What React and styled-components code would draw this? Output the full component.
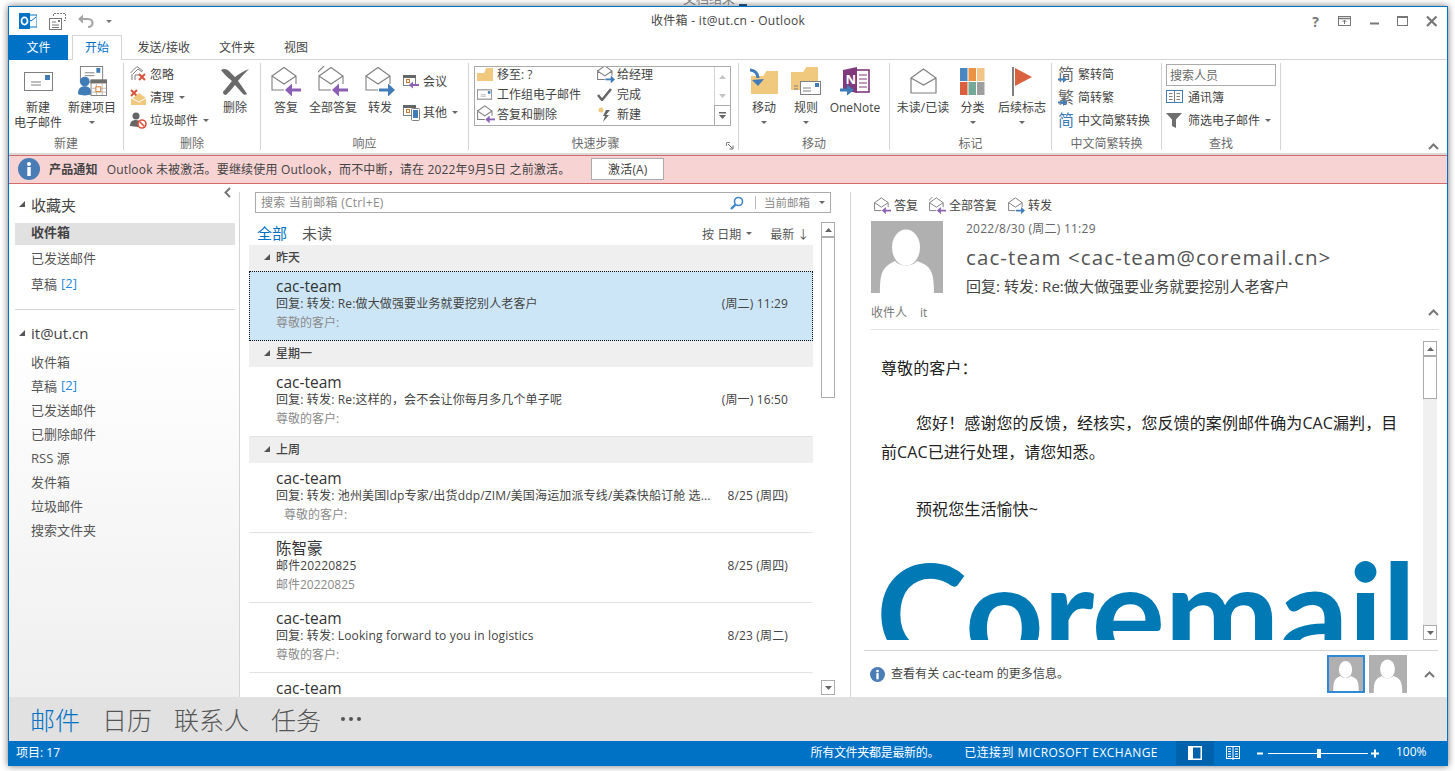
import React from 'react';
import styled, { createGlobalStyle } from 'styled-components';

const GlobalStyle = createGlobalStyle`
  html, body {
    margin: 0;
    padding: 0;
    height: 100%;
    overflow: hidden;
    background: #fff;
  }
  body {
    font-family: "Open Sans", "Noto Sans CJK SC", sans-serif;
    font-size: 12px;
    color: #444;
  }
`;

const Page = styled.div`
  padding: 6px 0 0 8px;
  position: relative;
`;

const BehindText = styled.div`
  position: absolute;
  left: 683px;
  top: -10px;
  font-size: 13px;
  line-height: 16px;
  color: #8a8a8a;
`;

const BehindMark = styled.div`
  position: absolute;
  left: 739px;
  top: 4px;
  width: 8px;
  height: 2px;
  background: #2b5c8a;
`;

const Window = styled.div`
  width: 1440px;
  height: 760px;
  box-sizing: border-box;
  border: 1px solid #0072c6;
  box-shadow: 0 0 7px rgba(0, 0, 0, 0.55);
  display: flex;
  flex-direction: column;
  background: #fff;
  position: relative;
`;

/* title bar */
const TitleBar = styled.div`
  height: 28px;
  flex: none;
  display: grid;
  grid-template-columns: 1fr auto 1fr;
  align-items: center;
`;

const Qat = styled.div`
  display: flex;
  align-items: center;
  gap: 12px;
  padding-left: 10px;
`;

const Title = styled.div`
  font-size: 12px;
  color: #444;
  letter-spacing: 0.3px;
  padding-bottom: 2px;
`;

const WinControls = styled.div`
  display: flex;
  justify-content: flex-end;
  align-items: center;
  padding-right: 1px;
`;

const WinControl = styled.div`
  width: 29px;
  height: 22px;
  display: flex;
  align-items: center;
  justify-content: center;
  color: #777;
  font-weight: 700;
  font-size: 14px;
`;

/* tabs */
const TabBar = styled.div`
  height: 25px;
  flex: none;
  display: flex;
  box-sizing: border-box;
  border-bottom: 1px solid #d4d4d4;
`;

const FileTab = styled.div`
  width: 59px;
  height: 25px;
  box-sizing: border-box;
  padding-bottom: 2px;
  background: #0072c6;
  color: #fff;
  display: flex;
  align-items: center;
  justify-content: center;
`;

const Tab = styled.div`
  height: 25px;
  box-sizing: border-box;
  display: flex;
  align-items: center;
  padding: 0 14.5px 2px;
  color: #444;
  ${(p) => p.$active && `
    width: 50px;
    justify-content: center;
    padding: 0 0 2px;
    margin: 0 1px 0 4px;
    color: #0072c6;
    background: #fff;
    border: 1px solid #d4d4d4;
    border-bottom: none;
  `}
`;

/* ribbon */
const Ribbon = styled.div`
  height: 95px;
  flex: none;
  box-sizing: border-box;
  border-bottom: 2px solid #d9d9d9;
  display: flex;
  position: relative;
`;

const Group = styled.div`
  width: ${(p) => p.$w}px;
  flex: none;
  box-sizing: border-box;
  margin-top: 3px;
  margin-bottom: 3px;
  border-right: 1px solid #d4d4d4;
  display: flex;
  flex-direction: column;
  position: relative;
`;

const GroupBody = styled.div`
  flex: 1;
  display: flex;
  gap: ${(p) => p.$gap ?? 5}px;
  padding-left: ${(p) => p.$pl ?? 5}px;
  min-height: 0;
`;

const GroupLabel = styled.div`
  height: 20px;
  flex: none;
  box-sizing: border-box;
  display: flex;
  align-items: center;
  justify-content: center;
  color: #6a6a6a;
  padding-top: 6px;
  padding-right: ${(p) => p.$pr ?? 0}px;
`;

const LargeBtn = styled.div`
  width: ${(p) => p.$w}px;
  flex: none;
  display: flex;
  flex-direction: column;
  align-items: center;
  line-height: 15px;
  color: #444;
  text-align: center;
  white-space: nowrap;
`;

const LargeIcon = styled.div`
  height: 33px;
  flex: none;
  box-sizing: border-box;
  padding-top: 3px;
  width: 100%;
  display: flex;
  align-items: center;
  justify-content: center;
  margin-bottom: 4px;
`;

const LargeLine = styled.div`
  flex: none;
`;

const Caret = styled.span`
  display: inline-block;
  width: 0;
  height: 0;
  border-left: 3px solid transparent;
  border-right: 3px solid transparent;
  border-top: 3px solid ${(p) => p.$color ?? '#666'};
  margin-left: ${(p) => p.$ml ?? 0}px;
  vertical-align: middle;
`;

const CaretRow = styled.div`
  height: 15px;
  flex: none;
  display: flex;
  align-items: center;
`;

const SmallCol = styled.div`
  flex: none;
  width: ${(p) => p.$w}px;
  display: flex;
  flex-direction: column;
  gap: ${(p) => p.$gap ?? 0}px;
  padding-top: ${(p) => p.$pt ?? 0}px;
`;

const SmallBtn = styled.div`
  height: 23px;
  flex: none;
  box-sizing: border-box;
  padding-bottom: 1px;
  display: flex;
  align-items: center;
  white-space: nowrap;
  color: #444;
`;

const SmallIcon = styled.span`
  width: ${(p) => p.$w ?? 20}px;
  flex: none;
  display: flex;
  align-items: center;
  position: relative;
`;

const Gallery = styled.div`
  width: 257px;
  height: 60px;
  flex: none;
  margin: 3px 0 0 5px;
  box-sizing: border-box;
  border: 1px solid #ababab;
  display: flex;
  overflow: hidden;
`;

const GalleryGrid = styled.div`
  flex: 1;
  display: grid;
  grid-template-columns: 120px 1fr;
  grid-auto-rows: 20px;
  padding-left: 2px;
  margin-top: -3px;
`;

const GalleryItem = styled.div`
  display: flex;
  align-items: center;
  white-space: nowrap;
`;

const GalleryIcon = styled.span`
  width: 20px;
  flex: none;
  display: flex;
  align-items: center;
`;

const GalleryScroll = styled.div`
  width: 15px;
  flex: none;
  border-left: 1px solid #d4d4d4;
  display: flex;
  flex-direction: column;
`;

const GalleryScrollBtn = styled.div`
  flex: 1;
  display: flex;
  align-items: center;
  justify-content: center;
  ${(p) => p.$last && 'border-top: 1px solid #ababab; border-left: 1px solid #ababab; margin-left: -1px;'}
`;

const Launcher = styled.div`
  position: absolute;
  right: 4px;
  bottom: 0;
  line-height: 0;
`;

const CollapseRibbon = styled.div`
  position: absolute;
  right: 8px;
  bottom: 3px;
  line-height: 0;
`;

const ZhGlyph = styled.span`
  font-size: 16px;
  line-height: 16px;
  color: ${(p) => p.$blue ? '#3f7cb8' : '#666'};
  position: relative;
  display: inline-block;
`;

const ZhArrow = styled.span`
  position: absolute;
  left: 0;
  bottom: -1px;
  line-height: 0;
`;

const PeopleSearch = styled.div`
  width: 110px;
  height: 22px;
  flex: none;
  box-sizing: border-box;
  border: 1px solid #ababab;
  color: #6a6a6a;
  display: flex;
  align-items: center;
  padding-left: 3px;
  margin-top: 1px;
`;

/* notice */
const Notice = styled.div`
  height: 29px;
  flex: none;
  box-sizing: border-box;
  background: #f7d3d4;
  border-top: 1px solid #d46a6a;
  border-bottom: 1px solid #d46a6a;
  display: flex;
  align-items: center;
  padding: 0 0 1px 9px;
  color: #444;
  letter-spacing: 0.17px;
`;

const NoticeTitle = styled.b`
  margin: 0 9px 0 9px;
  font-weight: 700;
`;

const NoticeBtn = styled.div`
  width: 73px;
  height: 22px;
  box-sizing: border-box;
  margin-left: 21px;
  background: #fff;
  border: 1px solid #ababab;
  display: flex;
  align-items: center;
  justify-content: center;
  color: #444;
`;

/* main */
const Main = styled.div`
  flex: 1;
  min-height: 0;
  display: flex;
`;

const PaneRule = styled.div`
  width: 1px;
  flex: none;
  margin-top: 8px;
  background: #d4d4d4;
`;

const LeftPane = styled.div`
  width: 230px;
  flex: none;
  box-sizing: border-box;
  padding: 0 4px 0 6px;
  background: linear-gradient(#fff 30%, #efefef);
  position: relative;
`;

const PaneChevron = styled.div`
  position: absolute;
  right: 6px;
  top: 5px;
  line-height: 0;
`;

const FolderHead = styled.div`
  height: 24px;
  box-sizing: border-box;
  display: flex;
  align-items: center;
  font-size: 15px;
  color: #444;
  padding: 0 0 2px 4px;
  margin-top: ${(p) => p.$mt ?? 0}px;
  margin-bottom: ${(p) => p.$mb ?? 0}px;
`;

const Tri = styled.span`
  width: 0;
  height: 0;
  border-style: solid;
  border-width: 0 0 6px 6px;
  border-color: transparent transparent #555 transparent;
  margin-right: ${(p) => p.$mr ?? 6}px;
  flex: none;
`;

const FolderItem = styled.div`
  height: ${(p) => p.$h}px;
  box-sizing: border-box;
  display: flex;
  align-items: center;
  padding: 0 0 2px 16px;
  font-size: 13px;
  color: #555;
  ${(p) => p.$active && 'background: #e1e1e1; font-weight: 700; color: #444; padding-bottom: 5px;'}
`;

const Count = styled.span`
  color: #1f8ae0;
  margin-left: 4px;
`;

const FolderRule = styled.div`
  height: 1px;
  background: #d4d4d4;
  margin: 12px 0 12px;
`;

const ListPane = styled.div`
  width: 610px;
  flex: none;
  box-sizing: border-box;
  padding: 8px 0 0 9px;
  display: flex;
  flex-direction: column;
  overflow: hidden;
`;

const SearchBox = styled.div`
  width: 576px;
  height: 21px;
  flex: none;
  margin-left: 6px;
  box-sizing: border-box;
  border: 1px solid #ababab;
  display: flex;
  align-items: center;
  padding: 0 5px;
  color: #8a8a8a;
  font-size: 12px;
`;

const SearchText = styled.span`
  flex: 1;
  letter-spacing: 0.25px;
  padding-bottom: 2px;
`;

const SearchScope = styled.span`
  border-left: 1px solid #bbb;
  margin-left: 11px;
  padding-left: 8px;
  margin-right: 9px;
  line-height: 13px;
  font-size: 11.5px;
  color: #8a8a8a;
`;

const ListBody = styled.div`
  flex: 1;
  min-height: 0;
  margin-top: 9px;
  display: flex;
  gap: 8px;
`;

const ListCol = styled.div`
  width: 564px;
  flex: none;
  overflow: hidden;
`;

const FilterRow = styled.div`
  height: 23px;
  box-sizing: border-box;
  display: flex;
  align-items: center;
  padding: 0 0 3px 8px;
`;

const Filter = styled.span`
  font-size: 15px;
  margin-right: 15px;
  color: ${(p) => p.$active ? '#0072c6' : '#555'};
`;

const SortBtn = styled.span`
  font-size: 12px;
  color: #555;
  display: flex;
  align-items: center;
  margin-top: 3px;
  margin-left: ${(p) => p.$ml ?? 0}px;
`;

const Section = styled.div`
  height: 26px;
  box-sizing: border-box;
  background: #efefef;
  display: flex;
  align-items: center;
  padding: 0 0 2px 15px;
  font-size: 12px;
  color: #444;
  font-weight: 500;
`;

const Mail = styled.div`
  height: 70px;
  box-sizing: border-box;
  padding: 5px 24px 0 26px;
  border: 1px solid transparent;
  border-bottom-color: #e1e1e1;
  ${(p) => p.$selected && `
    background: #cde6f7;
    border: 1px dotted #111;
  `}
`;

const MailFrom = styled.div`
  font-size: 15.5px;
  line-height: 18px;
  color: #333;
`;

const MailRow = styled.div`
  display: flex;
  justify-content: space-between;
  line-height: 17px;
  font-size: 12px;
  color: #444;
  letter-spacing: 0.15px;
`;

const MailSubject = styled.span`
  width: 438px;
  white-space: nowrap;
  overflow: hidden;
`;

const MailPreview = styled.div`
  line-height: 22px;
  font-size: 12px;
  color: #8a8a8a;
  padding-left: ${(p) => p.$indent ?? 0}px;
`;

const ScrollTrack = styled.div`
  width: 14px;
  flex: none;
  background: ${(p) => p.$bg};
  display: flex;
  flex-direction: column;
  height: ${(p) => p.$h}px;
`;

const ScrollBtn = styled.div`
  height: 15px;
  flex: none;
  box-sizing: border-box;
  border: 1px solid #ababab;
  background: #fff;
  display: flex;
  align-items: center;
  justify-content: center;
`;

const ScrollThumb = styled.div`
  height: ${(p) => p.$h}px;
  flex: none;
  box-sizing: border-box;
  border: 1px solid #ababab;
  background: #fff;
  margin-bottom: auto;
`;

/* reading pane */
const Reader = styled.div`
  flex: 1;
  min-width: 0;
  display: flex;
  flex-direction: column;
`;

const ReaderActions = styled.div`
  height: 37px;
  flex: none;
  box-sizing: border-box;
  padding: 11px 0 0 23px;
  display: flex;
  gap: 11px;
`;

const ReaderAction = styled.div`
  height: 20px;
  display: flex;
  align-items: center;
  gap: 3px;
  color: #444;
`;

const ReaderHead = styled.div`
  height: 72px;
  flex: none;
  display: flex;
  padding-left: 20px;
`;

const HeadText = styled.div`
  margin-left: 23px;
  display: flex;
  flex-direction: column;
`;

const HeadDate = styled.div`
  font-size: 12px;
  line-height: 16px;
  color: #666;
  letter-spacing: 0.25px;
`;

const HeadFrom = styled.div`
  font-size: 20.5px;
  line-height: 28px;
  margin-top: 6px;
  color: #555;
  letter-spacing: 1.1px;
`;

const HeadSubject = styled.div`
  font-size: 15px;
  line-height: 20px;
  margin-top: 5px;
  color: #444;
  letter-spacing: 0.05px;
`;

const ToRow = styled.div`
  height: 37px;
  flex: none;
  box-sizing: border-box;
  margin: 0 8px 0 20px;
  border-bottom: 1px solid #e1e1e1;
  display: flex;
  align-items: center;
  color: #777;
  padding-top: 2px;
`;

const ToName = styled.span`
  margin-left: 13px;
  flex: 1;
`;

const BodyWrap = styled.div`
  height: 320px;
  flex: none;
  display: flex;
`;

const MailBody = styled.div`
  width: 572px;
  flex: none;
  box-sizing: border-box;
  height: 310px;
  padding: 24px 0 0 30px;
  overflow: hidden;
  font-size: 16px;
  line-height: 29px;
  color: #222;
  letter-spacing: 0.1px;
`;

const BodyLine = styled.div`
  width: 520px;
  margin-bottom: ${(p) => p.$mb ?? 0}px;
  text-indent: ${(p) => p.$indent ?? 0}px;
`;

const CoremailLogo = styled.div`
  font-family: Lato, sans-serif;
  font-weight: 700;
  font-size: 138px;
  line-height: 138px;
  height: 138px;
  color: #0079b4;
  margin: 18px 0 0 -5px;
  letter-spacing: -1px;
  white-space: nowrap;
`;

const BodyScroll = styled.div`
  padding: 11px 0 0 0;
`;

const ReaderFoot = styled.div`
  flex: 1;
  box-sizing: border-box;
  margin-left: 13px;
  margin-right: 9px;
  border-top: 1px solid #d4d4d4;
  display: flex;
  align-items: center;
  padding-left: 6px;
  color: #444;
`;

const FootText = styled.span`
  margin-left: 6px;
  flex: 1;
  padding-bottom: 3px;
  letter-spacing: 0.05px;
`;

const AvatarFrame = styled.div`
  width: 38px;
  height: 38px;
  box-sizing: border-box;
  line-height: 0;
  border: ${(p) => p.$active ? '2px solid #2e8ad8' : '0'};
  margin-right: 4px;
`;

const FootChevron = styled.span`
  margin: 0 3px 0 13px;
  line-height: 0;
`;

/* nav + status */
const NavBar = styled.div`
  height: 44px;
  flex: none;
  background: #e1e1e1;
  display: flex;
  align-items: center;
  padding-left: 21px;
  gap: 22px;
`;

const NavItem = styled.span`
  font-size: 25px;
  font-weight: 300;
  color: ${(p) => p.$active ? '#0072c6' : '#555'};
`;

const NavMore = styled.span`
  display: flex;
  gap: 4px;
  margin-left: -2px;
`;

const Dot = styled.i`
  width: 4px;
  height: 4px;
  border-radius: 50%;
  background: #555;
`;

const StatusBar = styled.div`
  height: 24px;
  flex: none;
  box-sizing: border-box;
  background: #0072c6;
  color: #fff;
  display: flex;
  align-items: center;
  padding-left: 7px;
  font-size: 12px;
`;

const StatusGrow = styled.span`
  flex: 1;
`;

const StatusLabel = styled.span`
  padding-bottom: 3px;
`;

const StatusText = styled.span`
  margin-right: ${(p) => p.$mr}px;
  letter-spacing: ${(p) => p.$ls}px;
  padding-bottom: 3px;
`;

const ViewBtn = styled.div`
  width: ${(p) => p.$w}px;
  height: 24px;
  display: flex;
  align-items: center;
  justify-content: center;
  ${(p) => p.$active && 'background: #0062ab;'}
`;

const Zoomer = styled.div`
  display: flex;
  align-items: center;
  width: 144px;
  box-sizing: border-box;
  padding-left: 5px;
  line-height: 0;
`;

const ZoomValue = styled.span`
  width: 51px;
  padding-bottom: 3px;
`;

/* icons */
const GREY = '#7f7f7f';
const PURPLE = '#8a5fb5';
const BLUE = '#3f7cb8';
const TAN = '#f0c87e';

const OutlookLogo = () => (
  <svg width="18" height="18" viewBox="0 0 18 18">
    <rect x="6" y="3" width="12" height="12" fill="#fff" stroke="#0072c6" />
    <path d="M7 5l5 4 5-4" fill="none" stroke="#0072c6" />
    <rect x="0" y="1" width="11" height="16" fill="#0072c6" />
    <ellipse cx="5.5" cy="9" rx="3" ry="3.6" fill="none" stroke="#fff" strokeWidth="1.8" />
  </svg>
);

const SendReceiveIcon = () => (
  <svg width="17" height="17" viewBox="0 0 17 17" fill="none" stroke="#777">
    <path d="M4.5 3V.5h12v7H14" strokeDasharray="2 1" />
    <rect x=".5" y="5.5" width="12" height="11" fill="#fff" />
    <path d="M3 9h4M3 12h7M3 14.5h7" />
    <rect x="9" y="7" width="2" height="2" fill="#777" stroke="none" />
  </svg>
);

const UndoIcon = () => (
  <svg width="16" height="15" viewBox="0 0 16 15" fill="none">
    <path d="M4 5h6c3 0 4.500 2 4.500 4s-1.500 4-4.500 4" stroke="#a6a6a6" strokeWidth="2.200" />
    <path d="M0 5l5-4.500v9z" fill="#a6a6a6" />
  </svg>
);

const WinGlyph = ({ kind }) => (
  <svg width="14" height="14" viewBox="0 0 14 14" fill="none" stroke="#777">
    {kind === 'display' && <><rect x=".5" y="2.500" width="12" height="9" /><path d="M.5 4.500h12" strokeWidth="1.500" /><path d="M6.500 10V6M4.500 8l2-2 2 2" /></>}
    {kind === 'min' && <path d="M3 9.500h9" strokeWidth="2" />}
    {kind === 'max' && <><rect x="1.500" y="2.500" width="10" height="9" /><path d="M1.500 3h10" strokeWidth="2" /></>}
    {kind === 'close' && <path d="M2 2.500l9.500 9.500M11.500 2.500L2 12" strokeWidth="2.200" />}
  </svg>
);

const NewMailIcon = ({ small }) => (
  <svg width={small ? 15 : 29} height={small ? 11 : 19} viewBox="0 0 29 19" fill="none">
    <rect x=".5" y=".5" width="28" height="18" fill="#fff" stroke={GREY} strokeWidth={small ? 2 : 1} />
    <rect x="21" y="3" width="5" height="5" fill={BLUE} />
    <path d="M7 10h10M7 13h10" stroke={GREY} />
  </svg>
);

const NewItemsIcon = () => (
  <svg width="29" height="30" viewBox="0 0 30 31" fill="none">
    <rect x="2.500" y=".5" width="23" height="16" fill="#fff" stroke={GREY} />
    <rect x="19" y="2" width="4" height="5" fill={BLUE} />
    <path d="M7 7h10M7 10h10" stroke={GREY} />
    <circle cx="7" cy="16" r="5" fill={BLUE} />
    <path d="M0 29c0-6 3-8 7-8s7 2 7 8c-4 2-10 2-14 0z" fill={BLUE} />
    <rect x="13.500" y="14.500" width="16" height="16" fill="#fff" stroke={GREY} />
    <rect x="13" y="14" width="17" height="4" fill="#6f6f6f" />
    <path d="M19 18v12M25 18v12M14 23h15M14 27h15" stroke="#bbb" />
    <rect x="18.500" y="21.500" width="5" height="5" fill="#fff" stroke="#d97a2b" />
  </svg>
);

const IgnoreIcon = () => (
  <svg width="17" height="16" viewBox="0 0 17 16" fill="none">
    <path d="M.5 7L7 .5 13 5M3 8l5-5 4 3M2 14V8M5 14V9h5" stroke={GREY} />
    <path d="M9 8l6 6M15 8l-6 6" stroke="#d9543c" strokeWidth="2" />
  </svg>
);

const CleanIcon = () => (
  <svg width="17" height="17" viewBox="0 0 17 17" fill="none">
    <path d="M1 1l6 6M7 1L1 7" stroke="#d9543c" strokeWidth="2" />
    <path d="M1 9h2l6-5 7 5v7H1z" fill={TAN} />
    <path d="M1 9l8 4 7-4" stroke="#fff" />
  </svg>
);

const JunkIcon = () => (
  <svg width="17" height="17" viewBox="0 0 17 17" fill="none">
    <circle cx="6" cy="4" r="3.500" fill="#666" />
    <path d="M0 14c0-4 2-6 6-6 2 0 4 1 4 3l-2 4z" fill="#666" />
    <circle cx="12" cy="12" r="4" fill="#fff" stroke="#d9543c" strokeWidth="1.600" />
    <path d="M9.500 9.500l5 5" stroke="#d9543c" strokeWidth="1.600" />
  </svg>
);

const DeleteIcon = () => (
  <svg width="30" height="27" viewBox="0 0 30 27">
    <path d="M1 2c3-2 6-1 8 1l6 6c4-3 8-6 14-8-4 4-8 8-11 12 3 4 6 8 9 13-1 1-3 1-4 0l-8-9c-3 4-6 7-9 10-2 0-3-1-3-3 3-4 6-7 9-11C8 10 4 6 1 2z" fill="#6a6a6a" />
  </svg>
);

const MailActionIcon = ({ width = 30, all, forward }) => {
  const color = forward ? BLUE : PURPLE;
  const sw = width < 22 ? 1.700 : 1.100;
  return (
    <svg width={width} height={width} viewBox="0 0 30 30" fill="none">
      {all && <path d="M-2 14V8L6 0" stroke={GREY} strokeWidth={sw} />}
      <path d="M1 10L13 1.500 25 10v8M25 10L13 18 1 10v14h12" stroke={GREY} strokeWidth={sw} />
      {forward
        ? <><path d="M14 24h10" stroke={color} strokeWidth="3" /><path d="M30 24l-7-6.500v13z" fill={color} /></>
        : <><path d="M20 24h10" stroke={color} strokeWidth="3" /><path d="M14 24l7-6.500v13z" fill={color} /></>}
    </svg>
  );
};

const MeetingIcon = () => (
  <svg width="17" height="15" viewBox="0 0 17 15" fill="none">
    <rect x=".5" y="1.500" width="12" height="10" fill="#fff" stroke={GREY} />
    <rect x="0" y="1" width="13" height="3" fill="#666" />
    <rect x="3.500" y="5.500" width="3" height="3" stroke="#d97a2b" />
    <path d="M9 11h7" stroke={PURPLE} strokeWidth="2" />
    <path d="M6 11l4-3.500v7z" fill={PURPLE} />
  </svg>
);

const MoreIcon = () => (
  <svg width="17" height="17" viewBox="0 0 17 17" fill="none">
    <rect x=".5" y="1.500" width="12" height="10" fill="#fff" stroke={GREY} />
    <rect x="0" y="1" width="13" height="3" fill="#666" />
    <rect x="3.500" y="5.500" width="3" height="3" stroke="#d97a2b" />
    <rect x="8.500" y="4.500" width="8" height="12" rx="1" fill="#fff" stroke={GREY} />
    <rect x="10" y="6" width="5" height="8" fill={BLUE} />
  </svg>
);

const Folder = ({ x = 0, y = 0, w = 27, h = 23 }) => (
  <path d={`M${x} ${y + 5}h${w * 0.45}l${w * 0.12}-5h${w * 0.43}v${h}H${x}z`} fill={TAN} />
);

const MoveIcon = () => (
  <svg width="30" height="27" viewBox="0 0 30 27" fill="none">
    <Folder x={2} y={3} w={27} h={23} />
    <path d="M2 1c4 0 8 3 8 8" stroke={BLUE} strokeWidth="3" transform="translate(-1 1)" />
    <path d="M3 12l6 6 6-7z" fill={BLUE} />
  </svg>
);

const RulesIcon = () => (
  <svg width="31" height="28" viewBox="0 0 31 28" fill="none">
    <Folder x={0} y={0} w={27} h={23} />
    <rect x="9.500" y="14.500" width="20" height="13" fill="#fff" stroke={GREY} />
    <rect x="24" y="16" width="4" height="4" fill={BLUE} />
    <path d="M12 21h8M12 24h8M3 19h4M3 22h4" stroke={GREY} />
  </svg>
);

const OneNoteIcon = () => (
  <svg width="30" height="29" viewBox="0 0 30 29">
    <rect x="16" y="3" width="13" height="22" fill="#fff" stroke="#80397b" strokeWidth="1.600" />
    <path d="M19 8h8M19 12h8M19 16h8M19 20h8" stroke="#80397b" />
    <path d="M3 3l14-3v26l-14-3z" fill="#80397b" />
    <text x="5.500" y="17" fontSize="13" fontWeight="700" fill="#fff" fontFamily="Open Sans, sans-serif">N</text>
    <path d="M0 23h8" stroke={BLUE} strokeWidth="3" />
    <path d="M14 23l-7-5.500v11z" fill={BLUE} />
  </svg>
);

const ReadUnreadIcon = () => (
  <svg width="27" height="26" viewBox="0 0 27 26" fill="none" stroke={GREY} strokeWidth="1.200">
    <path d="M1 10L13.500 1 26 10v15H1zM1 10l12.500 7L26 10" />
  </svg>
);

const CategorizeIcon = () => {
  const cells = ['#4a87c0', '#ea9344', '#f0c585', '#d9603f', '#75a897', '#9e9e9e'];
  return (
    <svg width="25" height="27" viewBox="0 0 25 27">
      {cells.map((c, i) => (
        <rect key={c} x={(i % 3) * 8.500} y={Math.floor(i / 3) * 14} width="7.500" height="13" fill={c} />
      ))}
    </svg>
  );
};

const FlagIcon = () => (
  <svg width="20" height="29" viewBox="0 0 20 29">
    <rect x="0" y="0" width="2" height="29" fill="#7f7f7f" />
    <path d="M3 1l17 9-17 9z" fill="#d9633f" />
  </svg>
);

const ZhArrowIcon = () => (
  <svg width="9" height="7" viewBox="0 0 9 7">
    <path d="M0 2.500h5v2H0z" fill={BLUE} />
    <path d="M5 0l4 3.500L5 7z" fill={BLUE} />
  </svg>
);

const AddressBookIcon = () => (
  <svg width="17" height="14" viewBox="0 0 17 14" fill="none" stroke={GREY}>
    <rect x=".5" y=".5" width="16" height="12" stroke={BLUE} />
    <path d="M8.500 1v11M3 3.500h3.500M3 6.500h3.500M3 9.500h3.500M10.500 3.500H14M10.500 6.500H14M10.500 9.500H14" />
  </svg>
);

const FilterIcon = () => (
  <svg width="16" height="15" viewBox="0 0 16 15">
    <path d="M0 0h16L10 6.500V15l-4-2V6.500z" fill="#6f6f6f" />
  </svg>
);

const InfoIcon = ({ size }) => (
  <svg width={size} height={size} viewBox="0 0 22 22">
    <circle cx="11" cy="11" r="11" fill="#4a7db5" />
    <rect x="9.300" y="9" width="3.400" height="9" fill="#fff" />
    <circle cx="11" cy="6" r="2" fill="#fff" />
  </svg>
);

const Chevron = ({ left }) => (
  <svg width="11" height="7" viewBox="0 0 11 7" fill="none" transform={left ? 'rotate(-90)' : undefined}>
    <path d="M1 6l4.500-4.500L10 6" stroke="#777" strokeWidth="2" />
  </svg>
);

const ArrowGlyph = ({ down, fill = '#666' }) => (
  <svg width="7" height="4" viewBox="0 0 7 4">
    <path d={down ? 'M0 0h7L3.500 4z' : 'M0 4h7L3.500 0z'} fill={fill} />
  </svg>
);

const MoreGlyph = () => (
  <svg width="7" height="7" viewBox="0 0 7 7">
    <path d="M0 0h7v1.500H0zM0 3h7L3.500 7z" fill="#666" />
  </svg>
);

const LauncherIcon = () => (
  <svg width="8" height="8" viewBox="0 0 8 8" fill="none">
    <path d="M.5 4V.5H4" stroke="#888" />
    <path d="M2 2l4 4M7 3.500V7H3.500" stroke="#666" />
  </svg>
);

const SearchIcon = () => (
  <svg width="14" height="14" viewBox="0 0 14 14" fill="none">
    <circle cx="8.500" cy="5.500" r="4" stroke="#3f86c8" strokeWidth="1.600" />
    <path d="M5.500 8.500L1 13" stroke="#3f86c8" strokeWidth="2.400" />
  </svg>
);

const Person = ({ size }) => (
  <svg width={size} height={size} viewBox="0 0 72 72">
    <rect width="72" height="72" fill="#b0b0b0" />
    <ellipse cx="35" cy="26.500" rx="14" ry="18" fill="#fff" />
    <path d="M9 72c0-22 3-26 15-32 5 6 17 6 22 0 14 5 17 10 17 32z" fill="#fff" />
  </svg>
);

const ViewNormalIcon = () => (
  <svg width="14" height="14" viewBox="0 0 14 14">
    <rect x="0" y="0" width="14" height="14" fill="#fff" />
    <rect x="5" y="1.500" width="7.500" height="11" fill="#0062ab" />
  </svg>
);

const ViewReadIcon = () => (
  <svg width="14" height="14" viewBox="0 0 14 14" fill="none" stroke="#fff">
    <rect x=".5" y=".5" width="13" height="12" />
    <path d="M7 1v13M2 3h3M2 5.500h3M2 8h3M2 10.500h3M9 3h3M9 5.500h3M9 8h3M9 10.500h3" />
  </svg>
);

const ZoomSlider = () => (
  <svg width="123" height="11" viewBox="0 0 123 11">
    <path d="M11 5.500h100" stroke="#fff" strokeWidth="1" />
    <path d="M0 4.500h6v2H0zM117 1.500h2v8h-2zM114 4.500h8v2h-8z" fill="#fff" />
    <rect x="60" y="1" width="4" height="9" fill="#fff" />
  </svg>
);

const Scrollbar = ({ bg, height, thumb }) => (
  <ScrollTrack $bg={bg} $h={height}>
    <ScrollBtn><ArrowGlyph /></ScrollBtn>
    <ScrollThumb $h={thumb} />
    <ScrollBtn><ArrowGlyph down /></ScrollBtn>
  </ScrollTrack>
);

const Large = ({ w, icon, lines, caret }) => (
  <LargeBtn $w={w}>
    <LargeIcon>{icon}</LargeIcon>
    {lines.map((l) => <LargeLine key={l}>{l}</LargeLine>)}
    {caret && <CaretRow><Caret /></CaretRow>}
  </LargeBtn>
);

const Small = ({ icon, label, caret, iconW }) => (
  <SmallBtn>
    <SmallIcon $w={iconW}>{icon}</SmallIcon>
    {label}
    {caret && <Caret $ml={5} />}
  </SmallBtn>
);

const mails = [
  { section: '昨天' },
  { from: 'cac-team', subject: '回复: 转发: Re:做大做强要业务就要挖别人老客户', time: '(周二) 11:29', preview: '尊敬的客户:', selected: true },
  { section: '星期一' },
  { from: 'cac-team', subject: '回复: 转发: Re:这样的，会不会让你每月多几个单子呢', time: '(周一) 16:50', preview: '尊敬的客户:' },
  { section: '上周' },
  { from: 'cac-team', subject: '回复: 转发: 池州美国ldp专家/出货ddp/ZIM/美国海运加派专线/美森快船订舱 选...', time: '8/25 (周四)', preview: '尊敬的客户:', indent: 8 },
  { from: '陈智豪', subject: '邮件20220825', time: '8/25 (周四)', preview: '邮件20220825' },
  { from: 'cac-team', subject: '回复: 转发: Looking forward to you in logistics', time: '8/23 (周二)', preview: '尊敬的客户:' },
  { from: 'cac-team', subject: '', time: '', preview: '' },
];

const App = () => (
  <Page>
    <GlobalStyle />
    <BehindText>文档结果</BehindText>
    <BehindMark />
    <Window>
      <TitleBar>
        <Qat>
          <OutlookLogo />
          <SendReceiveIcon />
          <UndoIcon />
          <Caret $color="#777" />
        </Qat>
        <Title>收件箱 - it@ut.cn - Outlook</Title>
        <WinControls>
          <WinControl>?</WinControl>
          <WinControl><WinGlyph kind="display" /></WinControl>
          <WinControl><WinGlyph kind="min" /></WinControl>
          <WinControl><WinGlyph kind="max" /></WinControl>
          <WinControl><WinGlyph kind="close" /></WinControl>
        </WinControls>
      </TitleBar>

      <TabBar>
        <FileTab>文件</FileTab>
        <Tab $active>开始</Tab>
        <Tab>发送/接收</Tab>
        <Tab>文件夹</Tab>
        <Tab>视图</Tab>
      </TabBar>

      <Ribbon>
        <Group $w={115}>
          <GroupBody $pl={5}>
            <Large w={48} icon={<NewMailIcon />} lines={['新建', '电子邮件']} />
            <Large w={50} icon={<NewItemsIcon />} lines={['新建项目']} caret />
          </GroupBody>
          <GroupLabel>新建</GroupLabel>
        </Group>

        <Group $w={137}>
          <GroupBody $pl={6} $gap={0}>
            <SmallCol $w={84}>
              <Small icon={<IgnoreIcon />} label="忽略" />
              <Small icon={<CleanIcon />} label="清理" caret />
              <Small icon={<JunkIcon />} label="垃圾邮件" caret />
            </SmallCol>
            <Large w={42} icon={<DeleteIcon />} lines={['删除']} />
          </GroupBody>
          <GroupLabel>删除</GroupLabel>
        </Group>

        <Group $w={208}>
          <GroupBody $pl={7}>
            <Large w={36} icon={<MailActionIcon />} lines={['答复']} />
            <Large w={48} icon={<MailActionIcon all />} lines={['全部答复']} />
            <Large w={36} icon={<MailActionIcon forward />} lines={['转发']} />
            <SmallCol $w={60} $pt={7} $gap={8}>
              <Small icon={<MeetingIcon />} label="会议" />
              <Small icon={<MoreIcon />} label="其他" caret />
            </SmallCol>
          </GroupBody>
          <GroupLabel>响应</GroupLabel>
        </Group>

        <Group $w={270}>
          <Gallery>
            <GalleryGrid>
              <GalleryItem><GalleryIcon><svg width="16" height="13" viewBox="0 0 16 13"><Folder x={0} y={0} w={16} h={13} /></svg></GalleryIcon>移至: ?</GalleryItem>
              <GalleryItem><GalleryIcon><MailActionIcon width={18} forward /></GalleryIcon>给经理</GalleryItem>
              <GalleryItem><GalleryIcon><NewMailIcon small /></GalleryIcon>工作组电子邮件</GalleryItem>
              <GalleryItem><GalleryIcon><svg width="15" height="13" viewBox="0 0 15 13"><path d="M1 7l4 5 9-11" fill="none" stroke="#666" strokeWidth="2.500" /></svg></GalleryIcon>完成</GalleryItem>
              <GalleryItem><GalleryIcon><MailActionIcon width={18} /></GalleryIcon>答复和删除</GalleryItem>
              <GalleryItem><GalleryIcon><svg width="15" height="16" viewBox="0 0 15 16"><circle cx="4" cy="4" r="2.500" fill="#f0c87e" /><path d="M9 4h4L9 9h3l-6 7 2-6H6z" fill="#666" /></svg></GalleryIcon>新建</GalleryItem>
            </GalleryGrid>
            <GalleryScroll>
              <GalleryScrollBtn><ArrowGlyph fill="#c4c4c4" /></GalleryScrollBtn>
              <GalleryScrollBtn><ArrowGlyph down fill="#c4c4c4" /></GalleryScrollBtn>
              <GalleryScrollBtn $last><MoreGlyph /></GalleryScrollBtn>
            </GalleryScroll>
          </Gallery>
          <GroupBody />
          <GroupLabel $pr={16}>快速步骤</GroupLabel>
          <Launcher><LauncherIcon /></Launcher>
        </Group>

        <Group $w={151}>
          <GroupBody $pl={4} $gap={0}>
            <Large w={42} icon={<MoveIcon />} lines={['移动']} caret />
            <Large w={42} icon={<RulesIcon />} lines={['规则']} caret />
            <Large w={56} icon={<OneNoteIcon />} lines={['OneNote']} />
          </GroupBody>
          <GroupLabel>移动</GroupLabel>
        </Group>

        <Group $w={162}>
          <GroupBody $pl={9} $gap={0}>
            <Large w={48} icon={<ReadUnreadIcon />} lines={['未读/已读']} />
            <Large w={51} icon={<CategorizeIcon />} lines={['分类']} caret />
            <Large w={48} icon={<FlagIcon />} lines={['后续标志']} caret />
          </GroupBody>
          <GroupLabel>标记</GroupLabel>
        </Group>

        <Group $w={110}>
          <GroupBody $pl={6}>
            <SmallCol $w={100}>
              <Small iconW={20} icon={<ZhGlyph>简<ZhArrow><ZhArrowIcon /></ZhArrow></ZhGlyph>} label="繁转简" />
              <Small iconW={20} icon={<ZhGlyph>繁<ZhArrow><ZhArrowIcon /></ZhArrow></ZhGlyph>} label="简转繁" />
              <Small iconW={20} icon={<ZhGlyph $blue>简</ZhGlyph>} label="中文简繁转换" />
            </SmallCol>
          </GroupBody>
          <GroupLabel>中文简繁转换</GroupLabel>
        </Group>

        <Group $w={119}>
          <GroupBody $pl={4}>
            <SmallCol $w={110}>
              <PeopleSearch>搜索人员</PeopleSearch>
              <SmallBtn><SmallIcon $w={22}><AddressBookIcon /></SmallIcon>通讯簿</SmallBtn>
              <SmallBtn><SmallIcon $w={22}><FilterIcon /></SmallIcon>筛选电子邮件<Caret $ml={5} /></SmallBtn>
            </SmallCol>
          </GroupBody>
          <GroupLabel>查找</GroupLabel>
        </Group>

        <CollapseRibbon><Chevron /></CollapseRibbon>
      </Ribbon>

      <Notice>
        <InfoIcon size={22} />
        <NoticeTitle>产品通知</NoticeTitle>
        Outlook 未被激活。要继续使用 Outlook，而不中断，请在 2022年9月5日 之前激活。
        <NoticeBtn>激活(A)</NoticeBtn>
      </Notice>

      <Main>
        <LeftPane>
          <PaneChevron><Chevron left /></PaneChevron>
          <FolderHead $mt={9} $mb={6}><Tri />收藏夹</FolderHead>
          <FolderItem $h={22} $active>收件箱</FolderItem>
          <FolderItem $h={26}>已发送邮件</FolderItem>
          <FolderItem $h={26}>草稿<Count>[2]</Count></FolderItem>
          <FolderRule />
          <FolderHead $mb={4}><Tri />it@ut.cn</FolderHead>
          <FolderItem $h={24}>收件箱</FolderItem>
          <FolderItem $h={24}>草稿<Count>[2]</Count></FolderItem>
          <FolderItem $h={24}>已发送邮件</FolderItem>
          <FolderItem $h={24}>已删除邮件</FolderItem>
          <FolderItem $h={24}>RSS 源</FolderItem>
          <FolderItem $h={24}>发件箱</FolderItem>
          <FolderItem $h={24}>垃圾邮件</FolderItem>
          <FolderItem $h={24}>搜索文件夹</FolderItem>
        </LeftPane>
        <PaneRule />

        <ListPane>
          <SearchBox>
            <SearchText>搜索 当前邮箱 (Ctrl+E)</SearchText>
            <SearchIcon />
            <SearchScope>当前邮箱</SearchScope>
            <Caret />
          </SearchBox>
          <ListBody>
            <ListCol>
              <FilterRow>
                <Filter $active>全部</Filter>
                <Filter>未读</Filter>
                <SortBtn $ml={355}>按 日期<Caret $ml={5} /></SortBtn>
                <SortBtn $ml={18}>最新 ↓</SortBtn>
              </FilterRow>
              {mails.map((m, i) => (m.section
                ? <Section key={i}><Tri $mr={6} />{m.section}</Section>
                : (
                  <Mail key={i} $selected={m.selected}>
                    <MailFrom>{m.from}</MailFrom>
                    <MailRow><MailSubject>{m.subject}</MailSubject><span>{m.time}</span></MailRow>
                    <MailPreview $indent={m.indent}>{m.preview}</MailPreview>
                  </Mail>
                )))}
            </ListCol>
            <Scrollbar bg="#fff" height={473} thumb={161} />
          </ListBody>
        </ListPane>
        <PaneRule />

        <Reader>
          <ReaderActions>
            <ReaderAction><MailActionIcon width={17} />答复</ReaderAction>
            <ReaderAction><MailActionIcon width={17} all />全部答复</ReaderAction>
            <ReaderAction><MailActionIcon width={17} forward />转发</ReaderAction>
          </ReaderActions>
          <ReaderHead>
            <Person size={72} />
            <HeadText>
              <HeadDate>2022/8/30 (周二) 11:29</HeadDate>
              <HeadFrom>cac-team &lt;cac-team@coremail.cn&gt;</HeadFrom>
              <HeadSubject>回复: 转发: Re:做大做强要业务就要挖别人老客户</HeadSubject>
            </HeadText>
          </ReaderHead>
          <ToRow>收件人<ToName>it</ToName><Chevron /></ToRow>
          <BodyWrap>
            <MailBody>
              <BodyLine $mb={26}>尊敬的客户：</BodyLine>
              <BodyLine $indent={35} $mb={28}>您好！感谢您的反馈，经核实，您反馈的案例邮件确为CAC漏判，目前CAC已进行处理，请您知悉。</BodyLine>
              <BodyLine $indent={35}>预祝您生活愉快~</BodyLine>
              <CoremailLogo>Coremail</CoremailLogo>
            </MailBody>
            <BodyScroll><Scrollbar bg="#f0f0f0" height={299} thumb={43} /></BodyScroll>
          </BodyWrap>
          <ReaderFoot>
            <InfoIcon size={15} />
            <FootText>查看有关 cac-team 的更多信息。</FootText>
            <AvatarFrame $active><Person size={34} /></AvatarFrame>
            <AvatarFrame><Person size={38} /></AvatarFrame>
            <FootChevron><Chevron /></FootChevron>
          </ReaderFoot>
        </Reader>
      </Main>

      <NavBar>
        <NavItem $active>邮件</NavItem>
        <NavItem>日历</NavItem>
        <NavItem>联系人</NavItem>
        <NavItem>任务</NavItem>
        <NavMore><Dot /><Dot /><Dot /></NavMore>
      </NavBar>

      <StatusBar>
        <StatusLabel>项目: 17</StatusLabel>
        <StatusGrow />
        <StatusText $mr={25} $ls={-0.3}>所有文件夹都是最新的。</StatusText>
        <StatusText $mr={18} $ls={0.45}>已连接到 MICROSOFT EXCHANGE</StatusText>
        <ViewBtn $w={38} $active><ViewNormalIcon /></ViewBtn>
        <ViewBtn $w={38}><ViewReadIcon /></ViewBtn>
        <Zoomer><ZoomSlider /></Zoomer>
        <ZoomValue>100%</ZoomValue>
      </StatusBar>
    </Window>
  </Page>
);

export default App;
